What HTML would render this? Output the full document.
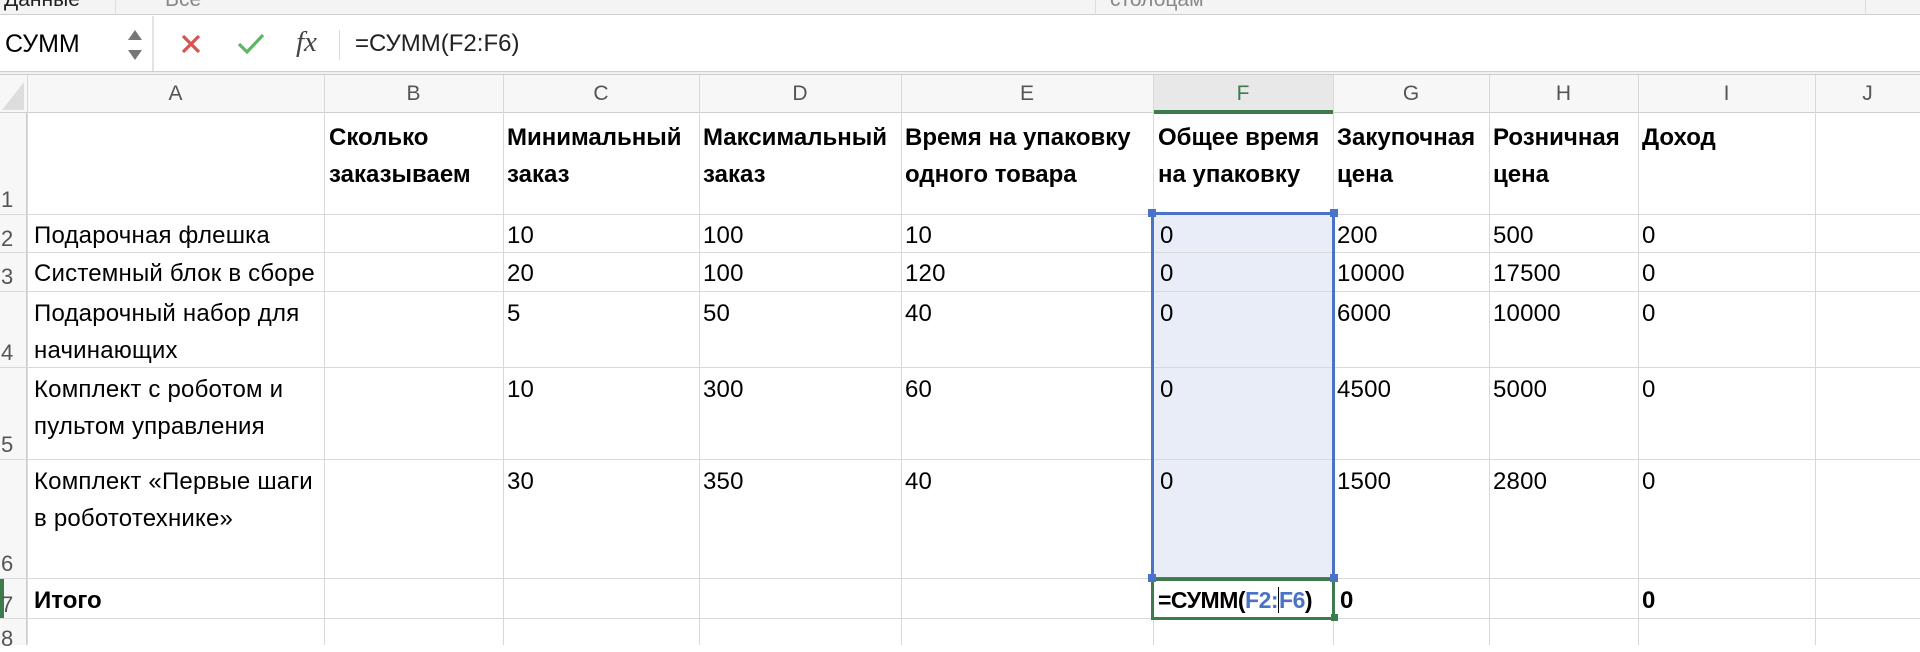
<!DOCTYPE html>
<html><head><meta charset="utf-8"><style>
*{margin:0;padding:0;box-sizing:border-box}
body{width:1920px;height:645px;overflow:hidden;background:#fff;font-family:"Liberation Sans","DejaVu Sans",sans-serif;position:relative;color:#000}
.a{position:absolute;white-space:nowrap}
.vl{position:absolute;width:1px;background:#d9d9d9}
.hl{position:absolute;height:1px;background:#d9d9d9}
.t{position:absolute;white-space:nowrap;font-size:24px;line-height:37px;letter-spacing:0.2px;margin-top:2px}
.b{font-weight:bold;letter-spacing:0}
.rn{position:absolute;left:1px;font-size:22px;color:#555;width:24px}
.ch{position:absolute;top:75px;height:38px;line-height:38px;text-align:center;font-size:21px;color:#555}
</style></head><body>
<div class="a" style="left:0;top:0;width:1920px;height:15px;background:#f4f4f4;border-bottom:1px solid #cfcfcf"></div>
<div class="a" style="left:4px;top:-12px;font-size:21px;color:#222">Данные</div>
<div class="a" style="left:165px;top:-12px;font-size:21px;color:#888">Все</div>
<div class="a" style="left:1110px;top:-12px;font-size:21px;color:#888">столбцам</div>
<div class="a" style="left:115px;top:0;width:1px;height:15px;background:#ddd"></div>
<div class="a" style="left:1095px;top:0;width:1px;height:15px;background:#ddd"></div>
<div class="a" style="left:1865px;top:0;width:1px;height:15px;background:#ddd"></div>
<div class="a" style="left:0;top:16px;width:1920px;height:55px;background:#fff"></div>
<div class="a" style="left:152px;top:16px;width:2px;height:55px;background:#e2e2e2"></div>
<div class="a" style="left:5px;top:29px;font-size:25px;line-height:30px">СУММ</div>
<svg class="a" style="left:127px;top:28px" width="16" height="34"><path d="M8 2 L15 12 L1 12Z" fill="#777"/><path d="M8 32 L15 22 L1 22Z" fill="#777"/></svg>
<svg class="a" style="left:180px;top:33px" width="22" height="22"><path d="M3 3 L19 19 M19 3 L3 19" stroke="#d9534f" stroke-width="3.2"/></svg>
<svg class="a" style="left:236px;top:32px" width="30" height="24"><path d="M3 12 L11 20 L27 3" stroke="#5cb85c" stroke-width="3.2" fill="none"/></svg>
<div class="a" style="left:296px;top:26px;font-family:'Liberation Serif',serif;font-style:italic;font-size:29px;color:#444">fx</div>
<div class="a" style="left:339px;top:30px;width:1px;height:30px;background:#ddd"></div>
<div class="a" style="left:355px;top:29px;font-size:24px;line-height:30px;color:#222">=СУММ(F2:F6)</div>
<div class="a" style="left:0;top:71px;width:1920px;height:4px;border-top:1px solid #cfcfcf;border-bottom:1px solid #cfcfcf;background:#f0f0f0"></div>
<div class="a" style="left:0;top:75px;width:1920px;height:38px;background:#f7f7f7;border-bottom:1px solid #cfcfcf"></div>
<div class="a" style="left:1153px;top:75px;width:180px;height:38px;background:#e8e8e8"></div>
<div class="a" style="left:1153px;top:110px;width:180px;height:4px;background:#3d7a4c"></div>
<svg class="a" style="left:0;top:78px" width="26" height="34"><path d="M24 4 L24 32 L2 32Z" fill="#ddd"/></svg>
<div class="a" style="left:0;top:113px;width:27px;height:532px;background:#f7f7f7;border-right:1px solid #cfcfcf"></div>
<div class="a" style="left:0;top:578px;width:4px;height:40px;background:#3d7a4c"></div>
<div class="ch" style="left:27px;width:297px">A</div>
<div class="ch" style="left:324px;width:179px">B</div>
<div class="ch" style="left:503px;width:196px">C</div>
<div class="ch" style="left:699px;width:202px">D</div>
<div class="ch" style="left:901px;width:252px">E</div>
<div class="ch" style="left:1153px;width:180px;color:#3d7a4c">F</div>
<div class="ch" style="left:1333px;width:156px">G</div>
<div class="ch" style="left:1489px;width:149px">H</div>
<div class="ch" style="left:1638px;width:177px">I</div>
<div class="ch" style="left:1815px;width:105px">J</div>
<div class="a" style="left:1153px;top:214px;width:180px;height:364px;background:#e9edf8"></div>
<div class="vl" style="left:27px;top:75px;height:570px"></div>
<div class="vl" style="left:324px;top:75px;height:570px"></div>
<div class="vl" style="left:503px;top:75px;height:570px"></div>
<div class="vl" style="left:699px;top:75px;height:570px"></div>
<div class="vl" style="left:901px;top:75px;height:570px"></div>
<div class="vl" style="left:1153px;top:75px;height:570px"></div>
<div class="vl" style="left:1333px;top:75px;height:570px"></div>
<div class="vl" style="left:1489px;top:75px;height:570px"></div>
<div class="vl" style="left:1638px;top:75px;height:570px"></div>
<div class="vl" style="left:1815px;top:75px;height:570px"></div>
<div class="hl" style="left:0;top:214px;width:1920px"></div>
<div class="hl" style="left:0;top:252px;width:1920px"></div>
<div class="hl" style="left:0;top:291px;width:1920px"></div>
<div class="hl" style="left:0;top:367px;width:1920px"></div>
<div class="hl" style="left:0;top:459px;width:1920px"></div>
<div class="hl" style="left:0;top:578px;width:1920px"></div>
<div class="hl" style="left:0;top:618px;width:1920px"></div>
<div class="rn" style="top:187px">1</div>
<div class="rn" style="top:226px">2</div>
<div class="rn" style="top:264px">3</div>
<div class="rn" style="top:340px">4</div>
<div class="rn" style="top:432px">5</div>
<div class="rn" style="top:551px">6</div>
<div class="rn" style="top:592px">7</div>
<div class="rn" style="top:626px">8</div>
<div class="t b" style="left:329px;top:117px">Сколько<br>заказываем</div>
<div class="t b" style="left:507px;top:117px">Минимальный<br>заказ</div>
<div class="t b" style="left:703px;top:117px">Максимальный<br>заказ</div>
<div class="t b" style="left:905px;top:117px">Время на упаковку<br>одного товара</div>
<div class="t b" style="left:1158px;top:117px">Общее время<br>на упаковку</div>
<div class="t b" style="left:1337px;top:117px">Закупочная<br>цена</div>
<div class="t b" style="left:1493px;top:117px">Розничная<br>цена</div>
<div class="t b" style="left:1642px;top:117px">Доход</div>
<div class="t" style="left:34px;top:215px">Подарочная флешка</div>
<div class="t" style="left:507px;top:215px">10</div>
<div class="t" style="left:703px;top:215px">100</div>
<div class="t" style="left:905px;top:215px">10</div>
<div class="t" style="left:1160px;top:215px">0</div>
<div class="t" style="left:1337px;top:215px">200</div>
<div class="t" style="left:1493px;top:215px">500</div>
<div class="t" style="left:1642px;top:215px">0</div>
<div class="t" style="left:34px;top:253px">Системный блок в сборе</div>
<div class="t" style="left:507px;top:253px">20</div>
<div class="t" style="left:703px;top:253px">100</div>
<div class="t" style="left:905px;top:253px">120</div>
<div class="t" style="left:1160px;top:253px">0</div>
<div class="t" style="left:1337px;top:253px">10000</div>
<div class="t" style="left:1493px;top:253px">17500</div>
<div class="t" style="left:1642px;top:253px">0</div>
<div class="t" style="left:34px;top:293px">Подарочный набор для<br>начинающих</div>
<div class="t" style="left:507px;top:293px">5</div>
<div class="t" style="left:703px;top:293px">50</div>
<div class="t" style="left:905px;top:293px">40</div>
<div class="t" style="left:1160px;top:293px">0</div>
<div class="t" style="left:1337px;top:293px">6000</div>
<div class="t" style="left:1493px;top:293px">10000</div>
<div class="t" style="left:1642px;top:293px">0</div>
<div class="t" style="left:34px;top:369px">Комплект с роботом и<br>пультом управления</div>
<div class="t" style="left:507px;top:369px">10</div>
<div class="t" style="left:703px;top:369px">300</div>
<div class="t" style="left:905px;top:369px">60</div>
<div class="t" style="left:1160px;top:369px">0</div>
<div class="t" style="left:1337px;top:369px">4500</div>
<div class="t" style="left:1493px;top:369px">5000</div>
<div class="t" style="left:1642px;top:369px">0</div>
<div class="t" style="left:34px;top:461px">Комплект «Первые шаги<br>в робототехнике»</div>
<div class="t" style="left:507px;top:461px">30</div>
<div class="t" style="left:703px;top:461px">350</div>
<div class="t" style="left:905px;top:461px">40</div>
<div class="t" style="left:1160px;top:461px">0</div>
<div class="t" style="left:1337px;top:461px">1500</div>
<div class="t" style="left:1493px;top:461px">2800</div>
<div class="t" style="left:1642px;top:461px">0</div>
<div class="t b" style="left:34px;top:580px">Итого</div>
<div class="t b" style="left:1340px;top:580px">0</div>
<div class="t b" style="left:1642px;top:580px">0</div>
<div class="a" style="left:1151px;top:212px;width:184px;height:368px;border:3px solid #4a72c8"></div>
<div class="a" style="left:1148px;top:209px;width:8px;height:8px;background:#4a72c8"></div>
<div class="a" style="left:1330px;top:209px;width:8px;height:8px;background:#4a72c8"></div>
<div class="a" style="left:1151px;top:578px;width:184px;height:42px;border:3px solid #3d7a4c;background:#fff"></div>
<div class="a" style="left:1148px;top:574px;width:8px;height:8px;background:#4a72c8"></div>
<div class="a" style="left:1330px;top:574px;width:8px;height:8px;background:#4a72c8"></div>
<div class="a" style="left:1331px;top:614px;width:7px;height:7px;background:#3d7a4c"></div>
<div class="t b" style="left:1158px;top:580px;letter-spacing:-0.5px;font-size:23px">=СУММ(<span style="color:#4a72c8">F2:</span><span style="border-left:1px solid #000;color:#4a72c8">F6</span>)</div>
</body></html>
